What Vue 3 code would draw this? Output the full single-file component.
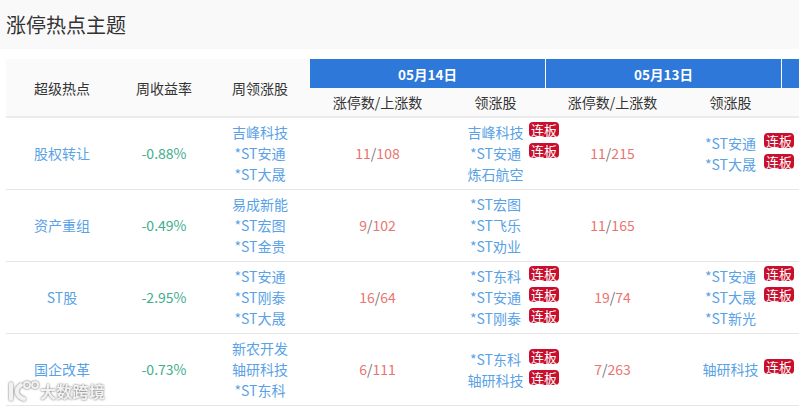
<script setup>
const rows = [
  { topic: '股权转让', ret: '-0.88%', week: ['吉峰科技', '*ST安通', '*ST大晟'],
    d1: ['11', '108'], s1: [['吉峰科技', 1], ['*ST安通', 1], ['炼石航空', 0]],
    d2: ['11', '215'], s2: [['*ST安通', 1], ['*ST大晟', 1]] },
  { topic: '资产重组', ret: '-0.49%', week: ['易成新能', '*ST宏图', '*ST金贵'],
    d1: ['9', '102'], s1: [['*ST宏图', 0], ['*ST飞乐', 0], ['*ST劝业', 0]],
    d2: ['11', '165'], s2: [] },
  { topic: 'ST股', ret: '-2.95%', week: ['*ST安通', '*ST刚泰', '*ST大晟'],
    d1: ['16', '64'], s1: [['*ST东科', 1], ['*ST安通', 1], ['*ST刚泰', 1]],
    d2: ['19', '74'], s2: [['*ST安通', 1], ['*ST大晟', 1], ['*ST新光', 0]] },
  { topic: '国企改革', ret: '-0.73%', week: ['新农开发', '轴研科技', '*ST东科'],
    d1: ['6', '111'], s1: [['*ST东科', 1], ['轴研科技', 1]],
    d2: ['7', '263'], s2: [['轴研科技', 1]] }
]
</script>

<template>
  <div class="page">
    <header class="title">涨停热点主题</header>
    <div class="wrap">
      <table class="tbl">
        <colgroup>
          <col class="c112" /><col class="c92" /><col class="c100" />
          <col class="c135" /><col class="c101" />
          <col class="c133" /><col class="c103" />
          <col class="c136" />
        </colgroup>
        <thead>
          <tr class="top">
            <th rowspan="2" class="plain">超级热点</th>
            <th rowspan="2" class="plain">周收益率</th>
            <th rowspan="2" class="plain">周领涨股</th>
            <th colspan="2" class="date">05月14日</th>
            <th colspan="2" class="date">05月13日</th>
            <th class="date"></th>
          </tr>
          <tr class="sub">
            <th>涨停数/上涨数</th><th>领涨股</th><th>涨停数/上涨数</th><th>领涨股</th><th></th>
          </tr>
        </thead>
        <tbody>
          <tr v-for="r in rows" :key="r.topic">
            <td class="link up">{{ r.topic }}</td>
            <td class="green up">{{ r.ret }}</td>
            <td class="link"><div v-for="w in r.week" :key="w" class="line">{{ w }}</div></td>
            <td class="count up"><span>{{ r.d1[0] }}</span><i>/</i><span>{{ r.d1[1] }}</span></td>
            <td class="link">
              <div v-for="s in r.s1" :key="s[0]" class="line">{{ s[0] }}<b v-if="s[1]" class="tag">连板</b></div>
            </td>
            <td class="count up"><span>{{ r.d2[0] }}</span><i>/</i><span>{{ r.d2[1] }}</span></td>
            <td class="link">
              <div v-for="s in r.s2" :key="s[0]" class="line">{{ s[0] }}<b v-if="s[1]" class="tag">连板</b></div>
            </td>
            <td></td>
          </tr>
        </tbody>
      </table>
    </div>
    <div class="mark">
      <svg width="32" height="22" viewBox="0 0 32 22" fill="none" stroke="#f2f2f2" stroke-width="4" stroke-linecap="round">
        <path d="M3 4 L3 19" /><path d="M13 5 C7 9 7 16 16 19" />
        <circle cx="19" cy="5" r="3" stroke-width="2" /><circle cx="27" cy="5" r="3" stroke-width="2" />
      </svg>
      <span>大数跨境</span>
    </div>
  </div>
</template>

<style>
html, body { margin: 0; background: #fff; }
</style>

<style scoped>
.page {
  position: relative;
  width: 799px;
  height: 407px;
  overflow: hidden;
  background: #fff;
  font-family: "Noto Sans CJK SC", "Noto Sans", sans-serif;
  font-size: 14px;
  color: #333;
}
.title {
  height: 49px;
  box-sizing: border-box;
  padding-left: 6px;
  background: #f9f9f9;
  font-size: 20px;
  line-height: 49px;
  color: #333;
}
.wrap { padding: 10px 0 0 6px; overflow: hidden; }
.tbl {
  table-layout: fixed;
  border-collapse: separate;
  border-spacing: 0;
  width: 912px;
}
.c112 { width: 112px; }
.c92 { width: 92px; }
.c100 { width: 100px; }
.c135 { width: 135px; }
.c101 { width: 101px; }
.c133 { width: 133px; }
.c103 { width: 103px; }
.c136 { width: 136px; }
th { font-weight: 400; padding: 0; text-align: center; }
.plain { background: #fafafa; border-bottom: 2px solid #ebebeb; }
.top { height: 29px; }
.date {
  background: #2d78d8;
  color: #fff;
  font-weight: 700;
  font-size: 13.5px;
  border-right: 1px solid #fff;
}
.sub { height: 30px; }
.sub th { background: #fafafa; border-bottom: 2px solid #ebebeb; }
td {
  height: 71px;
  padding: 0;
  text-align: center;
  vertical-align: middle;
  border-bottom: 1px solid #e6e6e6;
}
td.up { padding-bottom: 2px; height: 69px; }
.line { position: relative; height: 21px; line-height: 21px; }
.link { color: #59a2e6; }
.green { color: #3fae8c; }
.count { color: #ea7471; }
.count i { font-style: normal; color: #777; }
.tag {
  position: absolute;
  left: calc(50% + 33.5px);
  top: 0;
  width: 30px;
  height: 15px;
  line-height: 15px;
  border-radius: 4px;
  background: #c8102e;
  color: #fff;
  font-weight: 400;
  font-size: 13px;
}
.mark {
  position: absolute;
  left: 8px;
  top: 380px;
  display: flex;
  align-items: center;
  gap: 0;
  height: 22px;
  filter: drop-shadow(0 0 1px #666);
}
.mark span {
  font-size: 16px;
  font-weight: 700;
  letter-spacing: 0.3px;
  color: #f2f2f2;
}
</style>
